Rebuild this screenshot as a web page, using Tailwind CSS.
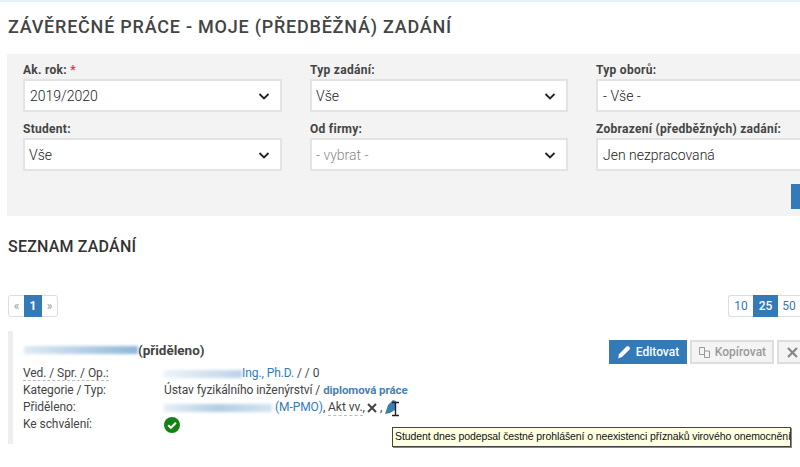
<!DOCTYPE html>
<html lang="en">
<head>
    <meta charset="UTF-8">
    <meta name="viewport" content="width=device-width, initial-scale=1.0">
    <title>Závěrečné práce - moje zadání</title>
    <script src="https://cdn.jsdelivr.net/npm/@tailwindcss/browser@4"></script>
</head>
<body class="relative h-[467px] w-[800px] overflow-hidden bg-white font-['Roboto',sans-serif] text-[#333]">

    <div class="h-[2px] bg-[#e0f5f5]"></div>

    <h1 class="ml-[8px] mt-[14px] h-[22px] whitespace-nowrap text-[18px] font-medium leading-[22px] tracking-[0.77px] text-[#444]">ZÁVĚREČNÉ PRÁCE - MOJE (PŘEDBĚŽNÁ) ZADÁNÍ</h1>

    <!-- Filter -->
    <div class="ml-[7px] mt-[16px] h-[162px] w-[900px] bg-[#f3f3f3] pl-[16px] pt-[7px]">
        <div class="grid grid-cols-[259px_258px_259px] gap-x-[28px] gap-y-[8px]">
            <div>
                <div class="h-[18px] text-[12px] font-bold leading-[18px] tracking-[0.28px] text-[#444]">Ak. rok: <span class="text-red-500">*</span></div>
                <div class="flex h-[33px] items-center justify-between border-2 border-[#e3e3e3] bg-white pl-[5px] pr-[10px] pt-[1px] text-[14px] font-light text-[#222]">2019/2020
                    <svg class="h-[12px] w-[12px]" viewBox="0 0 12 12" fill="none" stroke="#222" stroke-width="1.8"><path d="M1.500 4l4.500 4.500L10.500 4"/></svg>
                </div>
            </div>
            <div>
                <div class="h-[18px] text-[12px] font-bold leading-[18px] tracking-[0.28px] text-[#444]">Typ zadání:</div>
                <div class="flex h-[33px] items-center justify-between border-2 border-[#e3e3e3] bg-white pl-[4px] pr-[10px] pt-[1px] text-[14px] font-light text-[#222]">Vše
                    <svg class="h-[12px] w-[12px]" viewBox="0 0 12 12" fill="none" stroke="#222" stroke-width="1.8"><path d="M1.500 4l4.500 4.500L10.500 4"/></svg>
                </div>
            </div>
            <div>
                <div class="h-[18px] text-[12px] font-bold leading-[18px] tracking-[0.28px] text-[#444]">Typ oborů:</div>
                <div class="flex h-[33px] items-center border-2 border-[#e3e3e3] bg-white pl-[5px] pt-[1px] text-[14px] font-light text-[#222]">- Vše -</div>
            </div>
            <div>
                <div class="h-[18px] text-[12px] font-bold leading-[18px] tracking-[0.28px] text-[#444]">Student:</div>
                <div class="flex h-[33px] items-center justify-between border-2 border-[#e3e3e3] bg-white pl-[4px] pr-[10px] pt-[1px] text-[14px] font-light text-[#222]">Vše
                    <svg class="h-[12px] w-[12px]" viewBox="0 0 12 12" fill="none" stroke="#222" stroke-width="1.8"><path d="M1.500 4l4.500 4.500L10.500 4"/></svg>
                </div>
            </div>
            <div>
                <div class="h-[18px] text-[12px] font-bold leading-[18px] tracking-[0.28px] text-[#444]">Od firmy:</div>
                <div class="flex h-[33px] items-center justify-between border-2 border-[#e3e3e3] bg-white pl-[4px] pr-[10px] pt-[1px] text-[14px] font-light text-[#888]">- vybrat -
                    <svg class="h-[12px] w-[12px]" viewBox="0 0 12 12" fill="none" stroke="#222" stroke-width="1.8"><path d="M1.500 4l4.500 4.500L10.500 4"/></svg>
                </div>
            </div>
            <div>
                <div class="h-[18px] whitespace-nowrap text-[12px] font-bold leading-[18px] tracking-[0.28px] text-[#444]">Zobrazení (předběžných) zadání:</div>
                <div class="flex h-[33px] items-center border-2 border-[#e3e3e3] bg-white pl-[5px] pt-[1px] text-[14px] font-light text-[#222]">Jen nezpracovaná</div>
            </div>
        </div>
        <div class="ml-[768px] mt-[13px] h-[25px] w-[60px] bg-[#337ab7]"></div>
    </div>

    <h2 class="ml-[8px] mt-[21px] h-[20px] whitespace-nowrap text-[16px] font-medium leading-[20px] tracking-[0.2px] text-[#333]">SEZNAM ZADÁNÍ</h2>

    <!-- Pagers -->
    <div class="mt-[38px] flex h-[22px] justify-between pl-[8px] text-[12px]">
        <div class="flex h-full rounded-[3px] border border-[#ddd] text-[#999]">
            <span class="flex w-[15px] items-center justify-center">«</span>
            <span class="-my-px flex w-[18px] items-center justify-center bg-[#337ab7] font-bold text-white">1</span>
            <span class="flex w-[15px] items-center justify-center">»</span>
        </div>
        <div class="flex h-full rounded-l-[3px] border border-r-0 border-[#ddd] text-[#337ab7]">
            <span class="flex w-[24px] items-center justify-center">10</span>
            <span class="-my-px flex w-[25px] items-center justify-center bg-[#337ab7] font-medium text-white">25</span>
            <span class="flex w-[22px] items-center justify-center">50</span>
        </div>
    </div>

    <!-- Record -->
    <div class="relative ml-[8px] mt-[14px] h-[113px] w-[900px] border-l-[5px] border-[#eee] pl-[10px] pt-[9px]">
        <div class="flex items-start justify-between pr-[101px]">
            <div class="flex h-[20px] items-center">
                <span class="ml-[1px] h-[8px] w-[114px] bg-linear-to-r from-[#dfeaf4] to-[#8fb5d8] blur-[1.5px]"></span>
                <span class="text-[13.5px] font-bold text-[#444]">(přiděleno)</span>
            </div>
            <div class="flex gap-[3px] text-[12px] font-medium">
                <div class="flex h-[24px] w-[78px] items-center justify-center gap-[5px] bg-[#337ab7] text-white">
                    <svg class="h-[14px] w-[14px]" viewBox="0 0 14 14" fill="#fff"><path d="M9.500 1.500q1-1 2-.2l1.200 1.200q.8 1-.2 2L5 12l-3.800 1.500L2 9.200z"/></svg>
                    Editovat
                </div>
                <div class="flex h-[24px] w-[84px] items-center justify-center gap-[4px] border-2 border-[#ddd] bg-[#f4f4f4] text-[#999]">
                    <svg class="h-[13px] w-[13px]" viewBox="0 0 13 13" fill="none" stroke="#999"><path d="M1.500 1.500h5v7h-5zM6.500 5h5v6.500h-5z"/></svg>
                    Kopírovat
                </div>
                <div class="flex h-[24px] w-[30px] items-center justify-center border-2 border-[#ddd] bg-[#f4f4f4]">
                    <svg class="h-[11px] w-[11px]" viewBox="0 0 11 11" stroke="#888" stroke-width="2.200"><path d="M1 1l9 9M10 1l-9 9"/></svg>
                </div>
            </div>
        </div>
        <div class="mt-[1px] grid grid-cols-[141px_1fr] auto-rows-[17px] text-[12px] leading-[17px] tracking-[-0.07px] text-[#444]">
            <div><span class="border-b border-dashed border-[#bbb]">Ved. / Spr. / Op.:</span></div>
            <div class="flex items-center">
                <span class="h-[8px] w-[78px] bg-linear-to-r from-[#eef4f9] to-[#bcd3e8] blur-[1.5px]"></span>
                <span class="text-[#337ab7]">Ing., Ph.D.</span>&nbsp;/ / 0
            </div>
            <div>Kategorie / Typ:</div>
            <div class="whitespace-nowrap">Ústav fyzikálního inženýrství / <span class="text-[11.5px] font-bold text-[#4a7fb0]">diplomová práce</span></div>
            <div>Přiděleno:</div>
            <div class="flex items-center whitespace-nowrap">
                <span class="h-[8px] w-[108px] bg-linear-to-r from-[#e6eff6] via-[#b3cde4] to-[#d5e4f0] blur-[1.5px]"></span>
                <span class="ml-[3px] text-[#337ab7]">(M-PMO)</span>,&nbsp;<span class="border-b border-dashed border-[#bbb] leading-[15px]">Akt vv.</span>,
                <svg class="ml-[2px] h-[10px] w-[10px]" viewBox="0 0 10 10" stroke="#444" stroke-width="2"><path d="M1 1l8 8M9 1L1 9"/></svg>
                <span class="ml-[3px]">,</span>
                <svg class="-my-[3px] ml-[3px] h-[18px] w-[16px]" viewBox="0 0 16 18">
                    <path d="M0 15L3 6 8 1l3 1-1 9-5 3z" fill="#3d7fa8"/>
                    <path d="M10.500 3v13M7 16.500h7M7 3.500h7" stroke="#222" stroke-width="1.400" fill="none"/>
                </svg>
            </div>
            <div>Ke schválení:</div>
            <div class="flex items-center">
                <svg class="h-[16px] w-[16px]" viewBox="0 0 16 16"><circle cx="8" cy="8" r="8" fill="#158115"/><path d="M4.200 8.200l2.700 2.600 5-5" fill="none" stroke="#fff" stroke-width="2"/></svg>
            </div>
        </div>
    </div>

    <!-- Tooltip -->
    <div class="absolute left-[392px] top-[427px] flex h-[20px] w-[399px] items-center whitespace-nowrap border border-[#444] bg-[#ffffe1] pl-[2px] font-['Liberation_Sans',sans-serif] text-[10.5px] tracking-[-0.1px] text-[#111] shadow-[1px_1px_0_#888]">Student dnes podepsal čestné prohlášení o neexistenci příznaků virového onemocnění</div>

</body>
</html>
